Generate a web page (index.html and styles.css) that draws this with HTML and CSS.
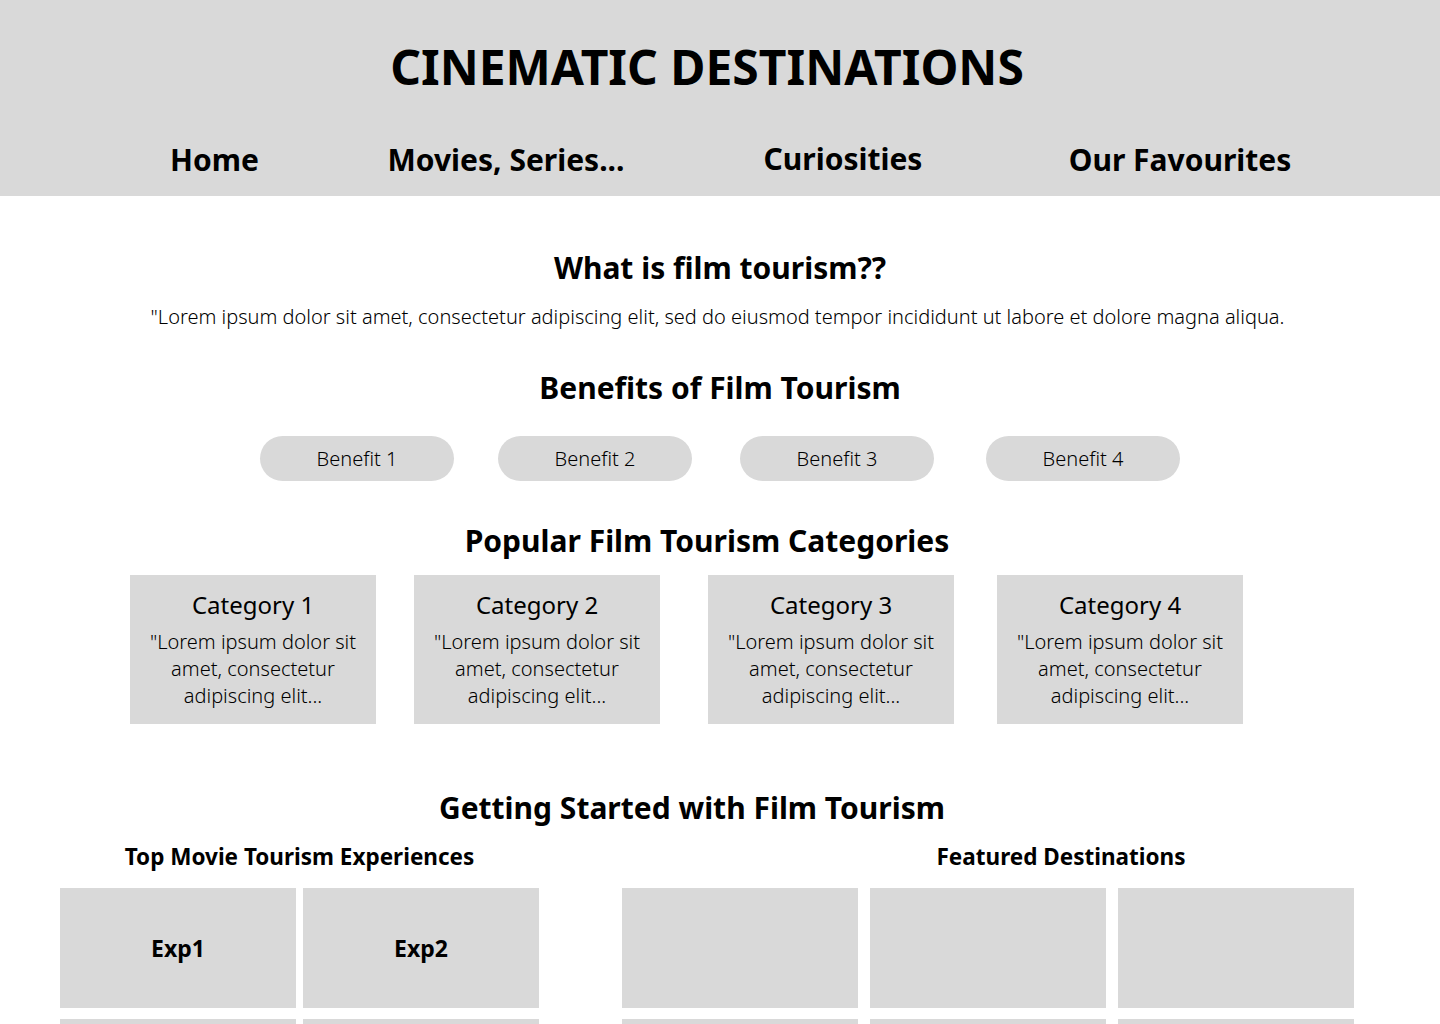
FILE: index.html
```html
<!DOCTYPE html>
<html lang="en">
<head>
  <meta charset="UTF-8">
  <meta name="viewport" content="width=device-width, initial-scale=1.0">
  <title>Cinematic Destinations</title>
  <link rel="stylesheet" href="styles.css">
</head>
<body>
  <header class="site-header">
    <h1 class="site-title">CINEMATIC DESTINATIONS</h1>
    <nav class="main-nav">
      <a href="#" class="nav-link">Home</a>
      <a href="#" class="nav-link">Movies, Series...</a>
      <a href="#" class="nav-link nav-link-up">Curiosities</a>
      <a href="#" class="nav-link">Our Favourites</a>
    </nav>
  </header>

  <main class="content">
    <section class="intro">
      <h2 class="section-title">What is film tourism??</h2>
      <p class="intro-text">"Lorem ipsum dolor sit amet, consectetur adipiscing elit, sed do eiusmod tempor incididunt ut labore et dolore magna aliqua.</p>
    </section>

    <section class="benefits">
      <h2 class="section-title">Benefits of Film Tourism</h2>
      <div class="pill-row">
        <span class="pill">Benefit 1</span>
        <span class="pill">Benefit 2</span>
        <span class="pill">Benefit 3</span>
        <span class="pill">Benefit 4</span>
      </div>
    </section>

    <section class="categories">
      <h2 class="section-title title-shift-sm">Popular Film Tourism Categories</h2>
      <div class="card-row">
        <div class="card">
          <h3 class="card-title">Category 1</h3>
          <p class="card-text">"Lorem ipsum dolor sit amet, consectetur adipiscing elit...</p>
        </div>
        <div class="card">
          <h3 class="card-title">Category 2</h3>
          <p class="card-text">"Lorem ipsum dolor sit amet, consectetur adipiscing elit...</p>
        </div>
        <div class="card">
          <h3 class="card-title">Category 3</h3>
          <p class="card-text">"Lorem ipsum dolor sit amet, consectetur adipiscing elit...</p>
        </div>
        <div class="card">
          <h3 class="card-title">Category 4</h3>
          <p class="card-text">"Lorem ipsum dolor sit amet, consectetur adipiscing elit...</p>
        </div>
      </div>
    </section>

    <section class="getting-started">
      <h2 class="section-title title-shift-lg">Getting Started with Film Tourism</h2>
      <div class="columns">
        <div class="column column-left">
          <h4 class="column-title">Top Movie Tourism Experiences</h4>
          <div class="exp-grid">
            <div class="tile">Exp1</div>
            <div class="tile">Exp2</div>
            <div class="tile"></div>
            <div class="tile"></div>
          </div>
        </div>
        <div class="column column-right">
          <h4 class="column-title column-title-shift">Featured Destinations</h4>
          <div class="dest-grid">
            <div class="tile"></div>
            <div class="tile"></div>
            <div class="tile"></div>
            <div class="tile"></div>
            <div class="tile"></div>
            <div class="tile"></div>
          </div>
        </div>
      </div>
    </section>
  </main>
</body>
</html>
```

FILE: styles.css
```css
body {
  font-family: "Noto Sans", "Open Sans", sans-serif;
  background-color: #ffffff;
  color: #000000;
  margin: 0;
  padding: 0;
}
.site-header {
  background-color: #d9d9d9;
  padding: 35px 0 16px;
  text-align: center;
}
.site-title {
  font-size: 48px;
  font-weight: 700;
  line-height: 64px;
  margin: 0;
  padding-right: 26px;
}
.main-nav {
  display: grid;
  grid-template-columns: 229px 354px 320px 354px;
  justify-items: center;
  margin-top: 41px;
  padding-left: 100px;
}
.nav-link {
  font-size: 30px;
  font-weight: 700;
  line-height: 40px;
  color: #000000;
  text-decoration: none;
  white-space: nowrap;
}
.nav-link-up {
  position: relative;
  top: -1px;
}
.content {
  padding-bottom: 40px;
}
.section-title {
  font-size: 30px;
  font-weight: 700;
  line-height: 40px;
  text-align: center;
  margin: 0;
}
.title-shift-sm {
  padding-right: 26px;
}
.title-shift-lg {
  padding-right: 56px;
}
.intro {
  margin-top: 52px;
}
.intro-text {
  font-size: 20px;
  font-weight: 300;
  line-height: 28px;
  text-align: center;
  margin: 15px 0 0;
  padding-right: 5px;
}
.benefits {
  margin-top: 37px;
}
.pill-row {
  display: grid;
  grid-template-columns: 238px 242px 246px 194px;
  margin-top: 28px;
  padding-left: 260px;
}
.pill {
  width: 194px;
  height: 45px;
  border-radius: 23px;
  background-color: #d9d9d9;
  font-size: 20px;
  font-weight: 300;
  line-height: 46px;
  text-align: center;
}
.categories {
  margin-top: 40px;
}
.card-row {
  display: grid;
  grid-template-columns: 284px 294px 289px 246px;
  margin-top: 14px;
  padding-left: 130px;
}
.card {
  width: 246px;
  height: 149px;
  box-sizing: border-box;
  padding: 14px 8px 0;
  background-color: #d9d9d9;
  text-align: center;
}
.card-title {
  font-size: 24px;
  font-weight: 400;
  line-height: 32px;
  margin: 0;
}
.card-text {
  font-size: 20px;
  font-weight: 300;
  line-height: 27px;
  margin: 7px 0 0;
}
.getting-started {
  margin-top: 64px;
}
.columns {
  display: flex;
  gap: 83px;
  margin-top: 14px;
  padding-left: 60px;
}
.column-title {
  font-size: 22.5px;
  font-weight: 700;
  line-height: 30px;
  text-align: center;
  margin: 0 0 16px;
}
.column-title-shift {
  padding-left: 146px;
}
.exp-grid {
  display: grid;
  grid-template-columns: 236px 236px;
  column-gap: 7px;
  row-gap: 11px;
}
.dest-grid {
  display: grid;
  grid-template-columns: 236px 236px 236px;
  column-gap: 12px;
  row-gap: 11px;
}
.tile {
  height: 120px;
  background-color: #d9d9d9;
  display: flex;
  align-items: center;
  justify-content: center;
  font-size: 23px;
  font-weight: 700;
}
```
